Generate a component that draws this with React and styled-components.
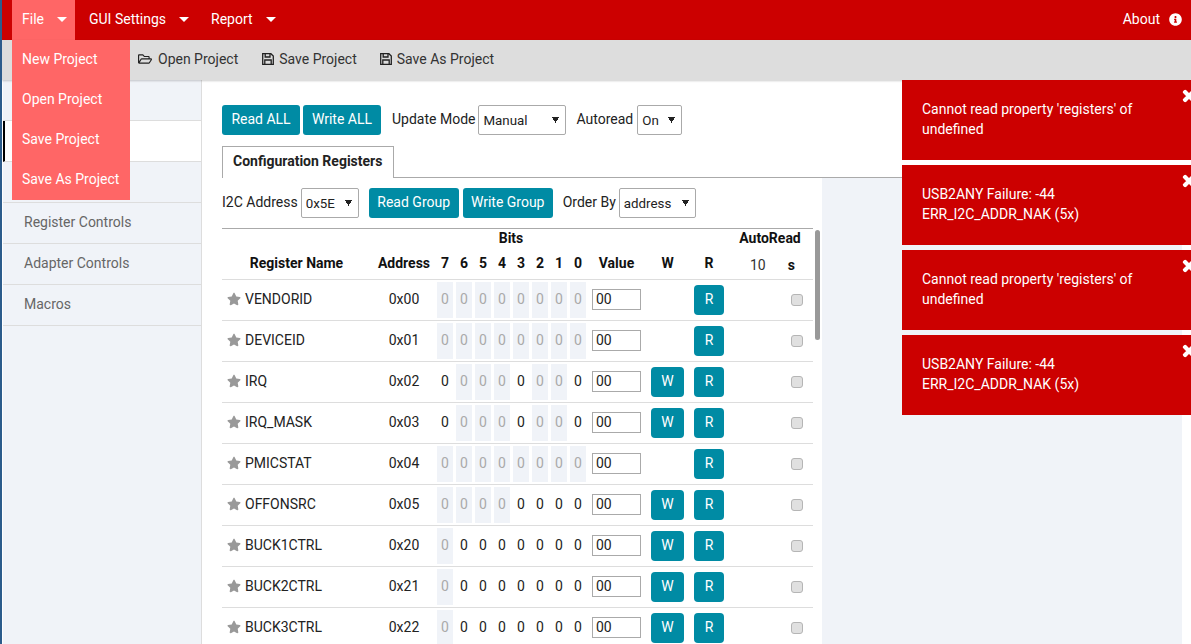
import React from 'react'
import styled, {createGlobalStyle} from 'styled-components'
import {FaInfoCircle, FaRegFolderOpen, FaStar, FaTimes} from 'react-icons/fa'

const GlobalStyle = createGlobalStyle`
  html, body {
    margin: 0;
    height: 100%;
    overflow: hidden;
    background: #fff;
  }
  body {
    font-family: Roboto, "Liberation Sans", sans-serif;
    font-size: 14px;
    color: #222;
  }
  * {
    box-sizing: border-box;
  }
`

const Page = styled.div`
  position: relative;
  width: 1191px;
  height: 644px;
  overflow: hidden;
  display: flex;
  flex-direction: column;
  border-left: 2px solid #2c5c8c;
`

const NavBar = styled.div`
  height: 40px;
  flex: none;
  background: #cc0000;
  display: flex;
  align-items: stretch;
  padding-left: 10px;
  color: #fff;
`

const NavItem = styled.div`
  position: relative;
  display: flex;
  align-items: center;
  width: ${props => props.$width}px;
  padding: 0 0 2px ${props => props.$left}px;
  background: ${props => (props.$open ? '#ff6666' : 'transparent')};
`

const Caret = styled.span`
  margin-left: 13px;
  width: 0;
  height: 0;
  border-top: 5px solid #fff;
  border-left: 5px solid transparent;
  border-right: 5px solid transparent;
`

const AboutItem = styled.div`
  margin-left: auto;
  display: flex;
  align-items: center;
  gap: 9px;
  padding: 0 9px 2px 0;
  svg {
    font-size: 13px;
  }
`

const DropMenu = styled.div`
  position: absolute;
  top: 40px;
  left: 0;
  width: 118px;
  background: #ff6666;
  z-index: 5;
`

const DropItem = styled.div`
  height: 40px;
  line-height: 39px;
  padding-left: 10px;
  white-space: nowrap;
`

const ToolBar = styled.div`
  height: 40px;
  flex: none;
  background: #dddddd;
  box-shadow: 0 1px 2px rgba(0, 0, 0, 0.2);
  display: flex;
  align-items: center;
  gap: 23px;
  padding: 0 0 2px 136px;
  position: relative;
  z-index: 1;
`

const ToolItem = styled.div`
  display: flex;
  align-items: center;
  gap: 5px;
  color: #333;
  svg {
    font-size: 14px;
    color: #222;
  }
  &:first-child {
    margin-right: 1px;
    svg {
      margin-right: 1px;
    }
  }
`

const Body = styled.div`
  flex: 1;
  min-height: 0;
  display: flex;
`

const SideBar = styled.div`
  width: 200px;
  flex: none;
  background: #f0f3f8;
  border-left: 1px solid #fff;
  border-right: 1px solid #ddd;
`

const SideItem = styled.div`
  height: 41px;
  line-height: 38px;
  padding-left: 21px;
  color: #666;
  border-bottom: 1px solid #ddd;
  background: ${props => (props.$active ? '#fff' : 'transparent')};
  border-left: ${props => (props.$active ? '2px solid #000' : 'none')};
`

const Main = styled.div`
  flex: 1;
  min-width: 0;
  display: flex;
  flex-direction: column;
  background: #fff;
`

const TopControls = styled.div`
  height: 98px;
  flex: none;
  padding: 25px 0 0 20px;
`

const ControlRow = styled.div`
  display: flex;
  align-items: center;
  height: 30px;
`

const Label = styled.span`
  margin-left: ${props => props.$left || 0}px;
  margin-right: ${props => props.$right || 3}px;
  padding-bottom: 2px;
`

const Select = styled.select`
  appearance: none;
  width: ${props => props.$width}px;
  height: 30px;
  border: 1px solid #aaa;
  border-radius: 2px;
  background: #fff conic-gradient(from 330deg at 50% 100%, #222 0 60deg, transparent 0) no-repeat right 6px center / 7px 6px;
  font-family: Roboto, "Liberation Sans", sans-serif;
  font-size: 13.33px;
  color: #222;
  padding: 1px 0 0 4px;
`

const Button = styled.button`
  height: 30px;
  width: ${props => props.$width}px;
  margin-left: ${props => props.$left || 0}px;
  border: none;
  border-radius: 3px;
  padding: 0 0 2px;
  background: #008ba4;
  color: #fff;
  font-family: Roboto, "Liberation Sans", sans-serif;
  font-size: 14px;
`

const TabStrip = styled.div`
  display: flex;
  height: 32px;
  margin-top: 11px;
  border-bottom: 1px solid #aaa;
`

const Tab = styled.div`
  width: 172px;
  height: 32px;
  line-height: 29px;
  padding-left: 10px;
  font-weight: 700;
  font-size: 14px;
  background: #fff;
  border: 1px solid #aaa;
  border-bottom: none;
`

const Lower = styled.div`
  flex: 1;
  min-height: 0;
  display: flex;
  padding-right: 9px;
`

const RegisterPanel = styled.div`
  position: relative;
  width: 620px;
  flex: none;
  background: #fff;
  padding: 10px 9px 0 20px;
  overflow: hidden;
`

const Backdrop = styled.div`
  flex: 1;
  background: #f0f3f8;
`

const ScrollThumb = styled.div`
  position: absolute;
  top: 52px;
  left: 613px;
  width: 5px;
  height: 110px;
  border-radius: 3px;
  background: #999;
`

const Table = styled.div`
  margin-top: 10px;
  border-top: 1px solid #aaa;
`

const columns = `149px 66px repeat(8, 19px) 55px 47px 36px 86px`

const HeaderRow = styled.div`
  display: grid;
  grid-template-columns: ${columns};
  align-items: center;
  height: ${props => props.$height}px;
  padding-bottom: 2px;
  font-weight: 700;
  text-align: center;
  color: #111;
  border-bottom: ${props => (props.$last ? '1px solid #ddd' : 'none')};
`

const BitsTitle = styled.div`
  grid-column: 3 / span 8;
  padding-right: 4px;
`

const AutoTitle = styled.div`
  grid-column: 14;
`

const AutoCols = styled.div`
  display: flex;
  justify-content: space-between;
  padding: 4px 8px 0 23px;
  font-weight: 400;
`

const AutoSeconds = styled.span`
  color: #333;
`

const AutoUnit = styled.span`
  font-weight: 700;
  margin-right: 10px;
`

const Row = styled.div`
  display: grid;
  grid-template-columns: ${columns};
  align-items: center;
  height: 41px;
  text-align: center;
  border-bottom: 1px solid #ddd;
`

const NameCell = styled.div`
  display: flex;
  align-items: center;
  gap: 4px;
  padding: 0 0 2px 5px;
  text-align: left;
  svg {
    font-size: 14px;
    color: #999;
  }
`

const AddressCell = styled.div`
  padding-bottom: 2px;
`

const BitHead = styled.div`
  width: 16px;
  text-align: center;
`

const Bit = styled.div`
  width: 16px;
  height: 36px;
  line-height: 34px;
  text-align: center;
  background: ${props => (props.$on ? 'transparent' : '#f0f3f8')};
  color: ${props => (props.$on ? '#222' : '#aaa')};
`

const ValueInput = styled.input`
  display: block;
  margin: 0 auto 2px;
  width: 49px;
  height: 21px;
  padding: 0 3px;
  border: 1px solid #aaa;
  border-radius: 0;
  font-family: Roboto, "Liberation Sans", sans-serif;
  font-size: 14px;
  color: #222;
`

const RowButton = styled(Button)`
  display: block;
  margin: 0 auto;
  border-radius: 4px;
`

const CheckCell = styled.div`
  display: flex;
  justify-content: flex-end;
  padding-right: 10px;
`

const Check = styled.input`
  appearance: none;
  width: 12px;
  height: 12px;
  margin: 0;
  background: #e0e0e0;
  border: 1px solid #b5b5b5;
  border-radius: 3px;
`

const ToastStack = styled.div`
  position: absolute;
  top: 80px;
  left: 900px;
  width: 300px;
  display: flex;
  flex-direction: column;
  gap: 5px;
  z-index: 4;
`

const Toast = styled.div`
  position: relative;
  height: 80px;
  padding: 19px 50px 0 20px;
  background: #cc0000;
  color: #fff;
  line-height: 20px;
`

const ToastClose = styled.span`
  position: absolute;
  top: 8px;
  left: 279px;
  font-size: 16px;
  line-height: 16px;
  svg {
    display: block;
    stroke: #fff;
    stroke-width: 40px;
  }
`

// font awesome 4 floppy, the 5 one in react-icons has a circle in it
const FloppyIcon = () => (
  <svg width="12" height="12" viewBox="0 0 12 12" fill="none" stroke="currentColor" strokeWidth="1.3">
    <path d="M.7.7H8.9L11.3 3.1V11.3H.7Z" />
    <path d="M3.2.7V4H8V.7" />
    <path d="M2.8 11.3V7H9.2V11.3" />
  </svg>
)

const fileItems = ['New Project', 'Open Project', 'Save Project', 'Save As Project']

const registers = [
  {name: 'VENDORID', address: '0x00', on: '00000000', write: false},
  {name: 'DEVICEID', address: '0x01', on: '00000000', write: false},
  {name: 'IRQ', address: '0x02', on: '10001001', write: true},
  {name: 'IRQ_MASK', address: '0x03', on: '10001001', write: true},
  {name: 'PMICSTAT', address: '0x04', on: '00000000', write: false},
  {name: 'OFFONSRC', address: '0x05', on: '00001111', write: true},
  {name: 'BUCK1CTRL', address: '0x20', on: '01111111', write: true},
  {name: 'BUCK2CTRL', address: '0x21', on: '01111111', write: true},
  {name: 'BUCK3CTRL', address: '0x22', on: '01111111', write: true},
]

const toasts = [
  ["Cannot read property 'registers' of", 'undefined'],
  ['USB2ANY Failure: -44', 'ERR_I2C_ADDR_NAK (5x)'],
  ["Cannot read property 'registers' of", 'undefined'],
  ['USB2ANY Failure: -44', 'ERR_I2C_ADDR_NAK (5x)'],
]

const App = () => {
  return (
    <Page>
      <GlobalStyle />
      <NavBar>
        <NavItem $open $width={63} $left={10}>
          File
          <Caret />
          <DropMenu>
            {fileItems.map(item => (
              <DropItem key={item}>{item}</DropItem>
            ))}
          </DropMenu>
        </NavItem>
        <NavItem $width={122} $left={14}>
          GUI Settings
          <Caret />
        </NavItem>
        <NavItem $width={90} $left={14}>
          Report
          <Caret />
        </NavItem>
        <AboutItem>
          About
          <FaInfoCircle />
        </AboutItem>
      </NavBar>
      <ToolBar>
        <ToolItem>
          <FaRegFolderOpen />
          Open Project
        </ToolItem>
        <ToolItem>
          <FloppyIcon />
          Save Project
        </ToolItem>
        <ToolItem>
          <FloppyIcon />
          Save As Project
        </ToolItem>
      </ToolBar>
      <Body>
        <SideBar>
          <SideItem />
          <SideItem $active />
          <SideItem />
          <SideItem>Register Controls</SideItem>
          <SideItem>Adapter Controls</SideItem>
          <SideItem>Macros</SideItem>
        </SideBar>
        <Main>
          <TopControls>
            <ControlRow>
              <Button $width={78}>Read ALL</Button>
              <Button $width={78} $left={3}>
                Write ALL
              </Button>
              <Label $left={11}>Update Mode</Label>
              <Select $width={88} defaultValue="Manual">
                <option>Manual</option>
                <option>Auto</option>
              </Select>
              <Label $left={10} $right={4}>
                Autoread
              </Label>
              <Select $width={45} defaultValue="On">
                <option>On</option>
                <option>Off</option>
              </Select>
            </ControlRow>
            <TabStrip>
              <Tab>Configuration Registers</Tab>
            </TabStrip>
          </TopControls>
          <Lower>
            <RegisterPanel>
              <ControlRow>
                <Label>I2C Address</Label>
                <Select $width={58} defaultValue="0x5E">
                  <option>0x5E</option>
                </Select>
                <Button $width={90} $left={10}>
                  Read Group
                </Button>
                <Button $width={90} $left={4}>
                  Write Group
                </Button>
                <Label $left={10}>Order By</Label>
                <Select $width={77} defaultValue="address">
                  <option>address</option>
                  <option>name</option>
                </Select>
              </ControlRow>
              <Table>
                <HeaderRow $height={19}>
                  <BitsTitle>Bits</BitsTitle>
                  <AutoTitle>AutoRead</AutoTitle>
                </HeaderRow>
                <HeaderRow $height={32} $last>
                  <div>Register Name</div>
                  <div>Address</div>
                  {[7, 6, 5, 4, 3, 2, 1, 0].map(bit => (
                    <BitHead key={bit}>{bit}</BitHead>
                  ))}
                  <div>Value</div>
                  <div>W</div>
                  <div>R</div>
                  <AutoCols>
                    <AutoSeconds>10</AutoSeconds>
                    <AutoUnit>s</AutoUnit>
                  </AutoCols>
                </HeaderRow>
                {registers.map(reg => (
                  <Row key={reg.name}>
                    <NameCell>
                      <FaStar />
                      {reg.name}
                    </NameCell>
                    <AddressCell>{reg.address}</AddressCell>
                    {reg.on.split('').map((flag, i) => (
                      <Bit key={i} $on={flag === '1'}>
                        0
                      </Bit>
                    ))}
                    <ValueInput defaultValue="00" />
                    <div>{reg.write && <RowButton $width={33}>W</RowButton>}</div>
                    <RowButton $width={30}>R</RowButton>
                    <CheckCell>
                      <Check type="checkbox" />
                    </CheckCell>
                  </Row>
                ))}
              </Table>
              <ScrollThumb />
            </RegisterPanel>
            <Backdrop />
          </Lower>
        </Main>
      </Body>
      <ToastStack>
        {toasts.map((lines, i) => (
          <Toast key={i}>
            {lines[0]}
            <br />
            {lines[1]}
            <ToastClose>
              <FaTimes />
            </ToastClose>
          </Toast>
        ))}
      </ToastStack>
    </Page>
  )
}

export default App
